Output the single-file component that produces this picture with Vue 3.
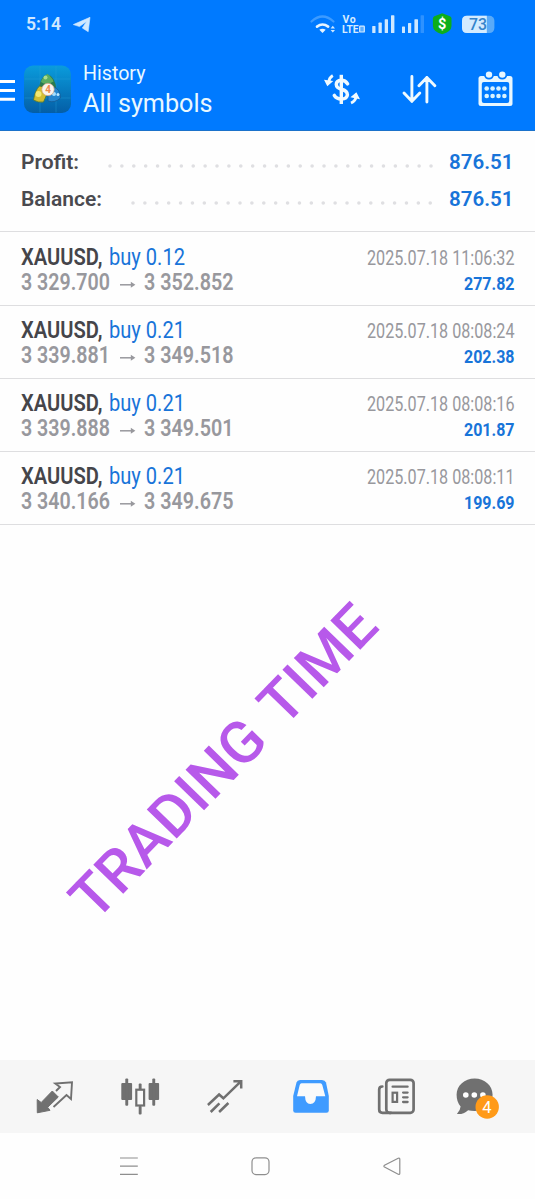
<script setup>
import { h } from 'vue'

// Single-line label set to an exact width, for condensed type.
const FitText = (props) =>
  h('svg', { width: props.w, height: props.h, class: 'fit' }, [
    h('text', { x: 0, y: props.b, textLength: props.w, lengthAdjust: 'spacingAndGlyphs' }, props.t),
  ])
FitText.props = ['w', 'h', 'b', 't']

const summary = [
  { label: 'Profit:', w: 58, dots: 322, value: '876.51' },
  { label: 'Balance:', w: 81, dots: 299, value: '876.51' },
]

const deals = [
  { side: 'buy 0.12', open: '3 329.700', close: '3 352.852', time: '2025.07.18 11:06:32', profit: '277.82' },
  { side: 'buy 0.21', open: '3 339.881', close: '3 349.518', time: '2025.07.18 08:08:24', profit: '202.38' },
  { side: 'buy 0.21', open: '3 339.888', close: '3 349.501', time: '2025.07.18 08:08:16', profit: '201.87' },
  { side: 'buy 0.21', open: '3 340.166', close: '3 349.675', time: '2025.07.18 08:08:11', profit: '199.69' },
]
</script>

<template>
  <div class="screen">
    <div class="status">
      <FitText class="clock" :w="35" :h="48" :b="30" t="5:14" />
      <svg class="plane" width="20" height="48" viewBox="72 0 20 48">
        <path d="M73.3 24.6 90 17.3 88.2 31.7 82.3 28 86.6 21.4 79.5 26.6Z" fill="#cfe8ff" stroke="#cfe8ff" stroke-width=".6" stroke-linejoin="round" />
      </svg>
      <svg class="signals" width="187" height="48" viewBox="309 0 187 48">
        <g fill="none" stroke-linecap="round">
          <path d="M311.5 21.5Q322.5 11.5 333.5 21.5" stroke="#3d9bff" stroke-width="2.2" />
          <path d="M317 26.6Q322.5 22.4 328.2 26.6" stroke="#e6f4ff" stroke-width="2.6" />
        </g>
        <path d="M319.3 29.7Q322.5 27.6 325.7 29.7L322.5 33Z" fill="#e6f4ff" />
        <path d="M330.6 28.4 332.8 25.8 335 28.4ZM330.6 30 332.8 32.6 335 30Z" fill="#cfe8ff" />
        <text class="lte" x="342.4" y="23.3" textLength="13.4">Vo</text>
        <text class="lte" x="342" y="32.6" textLength="16.5" lengthAdjust="spacingAndGlyphs">LTE</text>
        <rect x="359.7" y="26.2" width="4.6" height="5.8" rx=".6" fill="#5caeff" stroke="#d6ecff" stroke-width="1.2" />
        <g fill="#cfe8ff">
          <rect x="372.2" y="26" width="3.3" height="7" rx=".6" />
          <rect x="378.5" y="22.6" width="3.3" height="10.4" rx=".6" />
          <rect x="384.7" y="19.2" width="3.3" height="13.8" rx=".6" />
          <rect x="391" y="15.3" width="3.4" height="17.7" rx=".6" />
          <rect x="402" y="26.4" width="3" height="6.6" rx=".6" />
          <rect x="408" y="23" width="3.2" height="10" rx=".6" />
          <rect x="414.4" y="19.2" width="3.6" height="13.8" rx=".6" />
        </g>
        <rect x="420.6" y="15.3" width="3.4" height="17.7" rx=".6" fill="#2e92ff" />
        <path d="M442.2 13.3 450 16.3Q451.5 17 451.5 18.5V26Q451.5 31.5 442.2 34.2 432.9 31.5 432.9 26V18.5Q432.9 17 434.4 16.3Z" fill="#0cae1c" />
        <text x="442.2" y="29" class="coin" text-anchor="middle">$</text>
        <rect x="462" y="15.8" width="32.4" height="17.3" rx="5" fill="#59aaf8" />
        <path d="M467 15.8H486.8V33.1H467Q462 33.1 462 28.1V20.8Q462 15.8 467 15.8Z" fill="#d3ebff" />
        <text x="469" y="30.2" class="level" textLength="18" lengthAdjust="spacingAndGlyphs">73</text>
      </svg>
    </div>

    <header class="bar">
      <svg class="menu" width="15" height="83" viewBox="0 48 15 83">
        <path d="M0 81.5H15M0 90.5H15M0 99.3H15" stroke="#fff" stroke-width="3" />
      </svg>
      <svg class="logo" width="47" height="83" viewBox="24 48 47 83">
        <defs>
          <linearGradient id="tile" x1="0" y1="0" x2="0" y2="1">
            <stop offset="0" stop-color="#0a9cdc" />
            <stop offset="1" stop-color="#045ea6" />
          </linearGradient>
        </defs>
        <rect x="24" y="65.5" width="47" height="47.5" rx="9" fill="url(#tile)" />
        <path d="M40 66V112.5M56 66V112.5M24.5 79H70.5M24.5 98H70.5" stroke="#2aa5dc" stroke-width=".6" opacity=".6" />
        <path d="M39 90Q40 76 47.5 74.5 55 76 56.5 90Z" fill="#297b50" />
        <path d="M41 82Q42 77.5 47.3 74Q52 77 53.5 81.5 47 86 41 82Z" fill="#5aac62" />
        <circle cx="45.5" cy="77.5" r="2" fill="#a8dc8e" />
        <path d="M33.5 100Q35 90 39.5 86 47 87 47 94L43.5 102Q38 103 33.5 100Z" fill="#d1bd31" stroke="#4f7635" stroke-width=".8" />
        <circle cx="38.5" cy="94" r="3" fill="#f2e771" />
        <path d="M48 101Q47 91 54 87 60 89 60.5 98 54.5 103.5 48 101Z" fill="#2484ce" stroke="#155b94" stroke-width=".8" />
        <circle cx="54" cy="94" r="2" fill="#a5ddff" /><circle cx="58" cy="94.5" r="1.5" fill="#b9e6ff" />
        <circle cx="48" cy="89.5" r="6.2" fill="#f9f4ed" stroke="#cfa183" stroke-width=".7" />
        <text x="48" y="93" class="four" text-anchor="middle">4</text>
      </svg>
      <div class="titles">
        <FitText class="small" :w="62.5" :h="37" :b="32" t="History" />
        <FitText class="large" :w="129.5" :h="46" :b="27" t="All symbols" />
      </div>
      <svg class="act1" width="40" height="83" viewBox="322 48 40 83">
        <g fill="none" stroke="#f0faff">
          <path d="M341.3 74.8V104" stroke-width="3.4" />
          <path d="M347.6 83.8Q345.5 80.3 341.3 80.3 336.3 80.6 336.3 84.5 336.5 88 341.3 89.2 347.4 90.6 347.4 94.8 347 98.8 341.3 99 336.3 98.9 334.3 95.4" stroke-width="3.5" stroke-linecap="round" />
          <path d="M332.8 75.5Q329.2 77.6 328.7 82" stroke-width="2.8" />
          <path d="M351 103Q355.6 101 356.2 96.5" stroke-width="2.8" />
        </g>
        <path d="M324 79.8 327.3 86.3 333.3 81ZM350.4 97.2 356.4 92.2 360 99.2Z" fill="#f0faff" />
      </svg>
      <svg class="act2" width="36" height="83" viewBox="401 48 36 83">
        <path d="M411.9 76.5V101.5M404 93 411.9 101.3 419.8 93M426.9 102V77.5M418.9 85.8 426.9 77.5 434.9 85.8" fill="none" stroke="#f0faff" stroke-width="2.9" stroke-linecap="round" stroke-linejoin="round" />
      </svg>
      <svg class="act3" width="36" height="83" viewBox="478 48 36 83">
        <rect x="478.5" y="76" width="34" height="30" rx="2.5" fill="#e8f7ff" />
        <rect x="481.8" y="82" width="27.4" height="21" rx="2" fill="#007aff" />
        <g fill="#e8f7ff" stroke="#007aff" stroke-width="1.8">
          <circle cx="489" cy="74.6" r="4.1" /><circle cx="502.3" cy="74.6" r="4.1" />
        </g>
        <g fill="#d9f3ff">
          <g v-for="y in [88.5, 96]" :key="y">
            <circle v-for="x in [486.7, 492.6, 498.5, 504.4]" :key="x" :cx="x" :cy="y" r="2.3" />
          </g>
        </g>
      </svg>
    </header>

    <section class="summary">
      <div v-for="s in summary" :key="s.label" class="sum">
        <FitText class="label" :w="s.w" :h="37" :b="22" :t="s.label" />
        <svg class="dots" :width="s.dots + 4" height="37">
          <line x1="2" :x2="s.dots + 2" y1="19" y2="19" stroke="#dfdfe2" stroke-width="3.6" stroke-linecap="round" stroke-dasharray="0 11.89" />
        </svg>
        <FitText class="total" :w="64.5" :h="37" :b="22" :t="s.value" />
      </div>
    </section>

    <section class="deals">
      <article v-for="d in deals" :key="d.time" class="deal">
        <div class="line first">
          <FitText class="symbol" :w="81.5" :h="40" :b="31.6" t="XAUUSD," />
          <FitText class="side" :w="76" :h="40" :b="31.6" :t="d.side" />
          <FitText class="time" :w="147.5" :h="40" :b="31.8" :t="d.time" />
        </div>
        <div class="line">
          <FitText class="price" :w="89" :h="32" :b="17" :t="d.open" />
          <svg class="arrow" width="18" height="32">
            <path d="M1 11.8H14" fill="none" stroke="#98989d" stroke-width="1.5" />
            <path d="M11.8 8.8 16.4 11.8 11.8 14.8Z" fill="#98989d" />
          </svg>
          <FitText class="price" :w="89.5" :h="32" :b="17" :t="d.close" />
          <FitText class="gain" :w="50.5" :h="32" :b="16.6" :t="d.profit" />
        </div>
      </article>
    </section>

    <svg class="mark" width="340" height="340" viewBox="50 590 340 340">
      <text transform="translate(95.1 922.6) rotate(-45.85)">
        <tspan x="0" textLength="251" lengthAdjust="spacingAndGlyphs">TRADING</tspan>
        <tspan x="270.5" textLength="139.5" lengthAdjust="spacingAndGlyphs">TIME</tspan>
      </text>
    </svg>

    <nav class="tabs">
      <svg width="38" height="73" viewBox="36 1060 38 73">
        <path d="M37.2 1099.5 41.2 1102.5 52.3 1091 58.3 1097 47.7 1107.3 50 1110.3 37.3 1112.8Z" fill="#707070" stroke="#707070" stroke-linejoin="round" />
        <path d="M53.5 1107 66.5 1095 71 1099 72 1082.3 55.3 1083.6 60 1087 56 1091" fill="none" stroke="#707070" stroke-width="1.9" />
      </svg>
      <svg width="39" height="73" viewBox="120.9 1060 39 73">
        <g fill="#707070">
          <rect x="121.2" y="1083" width="10.8" height="17" rx="1" /><rect x="125.2" y="1078.5" width="2.9" height="27.2" rx="1" />
          <rect x="148.5" y="1083" width="10.5" height="17" rx="1" /><rect x="152.2" y="1078.5" width="2.9" height="27.2" rx="1" />
          <rect x="138.6" y="1083.5" width="2.9" height="7" rx="1" /><rect x="138.6" y="1106" width="2.9" height="8.5" rx="1" />
        </g>
        <rect x="136.2" y="1089.7" width="7.8" height="15.8" fill="#fafafa" stroke="#707070" stroke-width="2.2" />
      </svg>
      <svg width="37" height="73" viewBox="207.6 1060 37 73">
        <path d="M208.5 1105 219.7 1094.5 224 1098.3 241.5 1081.3M234 1081.2H241.8V1088.5M211.3 1112 220 1103.3M219.7 1112 229 1103" fill="none" stroke="#707070" stroke-width="2.5" />
      </svg>
      <svg width="36" height="73" viewBox="293 1060 36 73">
        <path d="M300 1080H322Q325 1080 326 1082.5L328.8 1096V1110.5Q328.8 1112.8 326.5 1112.8H295.5Q293.2 1112.8 293.2 1110.5V1096L296.5 1082.5Q297.3 1080 300 1080Z" fill="#3f9bff" />
        <path d="M301.5 1083.3H320.3Q321.8 1083.3 322.3 1085L325.3 1096.3H316Q315.8 1104 310.3 1104 305.3 1104 305 1096.3H297L299.7 1085Q300.2 1083.3 301.5 1083.3Z" fill="#fafafa" />
      </svg>
      <svg width="38" height="73" viewBox="377.2 1060 38 73">
        <g fill="none" stroke="#707070" stroke-width="2.7" stroke-linecap="round">
          <rect x="386.5" y="1079.8" width="27.3" height="33" rx="3.3" />
          <path d="M382.5 1086.5Q379.4 1086.5 379.4 1089.5V1109.5Q379.4 1112.8 382.7 1112.8H391" />
          <path d="M392.8 1086.7H407.8M403.3 1092.6H407.8M403.3 1097.3H407.8M403.3 1102H407.8" stroke-width="2.3" />
          <rect x="392.8" y="1092.7" width="4.5" height="9.2" stroke-width="2.2" />
        </g>
      </svg>
      <svg width="50" height="73" viewBox="456.4 1060 50 73">
        <path d="M475 1078.5C485 1078.5 493 1085.5 493 1094.8S485 1111 475 1111Q471.5 1111 468.5 1110.2 463.5 1114.7 457.3 1114Q460.7 1110.5 461 1106.5 457 1102 457 1094.8C457 1085.5 465 1078.5 475 1078.5Z" fill="#707070" />
        <g fill="#fff"><circle cx="466.2" cy="1095" r="2.8" /><circle cx="474.7" cy="1095" r="2.8" /><circle cx="483.3" cy="1095" r="2.8" /></g>
        <circle cx="487.6" cy="1107" r="11.7" fill="#ff9a18" />
        <text x="487.3" y="1112.7" class="count" text-anchor="middle">4</text>
      </svg>
    </nav>

    <footer class="keys">
      <svg width="18" height="66" viewBox="119.8 1133 18 66"><path d="M119.8 1158H137.6M119.8 1166.2H137.6M119.8 1174.4H137.6" stroke="#8e8e8e" stroke-width="1.2" /></svg>
      <svg width="19" height="66" viewBox="251.3 1133 19 66"><rect x="252.3" y="1157.8" width="17" height="16.8" rx="4" fill="none" stroke="#8e8e8e" stroke-width="1.2" /></svg>
      <svg width="18" height="66" viewBox="383.5 1133 18 66"><path d="M385 1165.3Q383.8 1166.2 385 1167.1L398.7 1174.3Q400.3 1174.8 400.3 1173.2V1159.2Q400.3 1157.6 398.7 1158.2Z" fill="none" stroke="#8e8e8e" stroke-width="1.2" /></svg>
    </footer>
  </div>
</template>

<style>
body { margin: 0; background: #fefefe; }
</style>

<style scoped>
.screen { position: relative; width: 535px; height: 1199px; display: flex; flex-direction: column; background: #fefefe; overflow: hidden; font-family: Roboto, "Liberation Sans", sans-serif; }
svg { display: block; flex: none; }
.fit { overflow: visible; flex: none; display: block; }
.status { height: 48px; display: flex; background: #007aff; }
.clock { margin-left: 26px; fill: #cfe8ff; font-size: 18px; font-weight: 600; }
.plane { margin-left: 11px; }
.signals { margin-left: 217px; }
.lte { font-size: 10.5px; font-weight: 700; fill: #d6ecff; }
.coin { font-size: 14.5px; font-weight: 700; fill: #fff; }
.level { font-size: 17px; font-weight: 500; fill: #3384cc; }
.bar { height: 82px; display: flex; background: #007aff; border-bottom: 1px solid #1b72cb; }
.logo { margin-left: 9px; }
.four { font-size: 10px; font-weight: 700; fill: #ef8a4a; }
.titles { width: 130px; margin-left: 12px; }
.small { fill: #e9f8ff; font-size: 19.5px; }
.large { fill: #e9f8ff; font-size: 25px; }
.act1 { margin-left: 109px; }
.act2 { margin-left: 39px; }
.act3 { margin-left: 41px; }
.summary { height: 101px; padding: 16px 21.5px 0 20.5px; box-sizing: border-box; border-bottom: 1px solid #dedee0; }
.sum { height: 37px; display: flex; }
.label { fill: #4a4a4f; font-size: 20.5px; font-weight: 600; }
.dots { margin-left: auto; margin-right: 15px; }
.total { fill: #1874d9; font-size: 20.5px; font-weight: 600; }
.deals { padding-top: 1px; }
.deal { height: 73px; box-sizing: border-box; padding: 0 21px 0 20.5px; border-bottom: 1px solid #dedee0; }
.line { display: flex; }
.first { height: 40px; }
.symbol { fill: #45454a; font-size: 24px; font-weight: 600; }
.side { fill: #1874d9; font-size: 24px; margin-left: 6.5px; }
.time { fill: #98989d; font-size: 19.3px; margin-left: auto; }
.price { fill: #98989d; font-size: 23px; font-weight: 600; }
.arrow { margin: 0 7px 0 9.5px; }
.gain { fill: #1874d9; font-size: 19px; font-weight: 700; margin-left: auto; }
.mark { position: absolute; left: 50px; top: 590px; overflow: visible; fill: #b759ea; font-size: 58.7px; font-weight: 500; }
.tabs { margin-top: auto; height: 73px; display: grid; grid-template-columns: repeat(6, 85.25px); justify-items: center; padding-left: 12.4px; background: #f6f6f6; }
.count { fill: #fff; font-size: 16.5px; }
.keys { height: 66px; display: flex; justify-content: space-between; padding: 0 133.5px 0 119.8px; }
</style>
